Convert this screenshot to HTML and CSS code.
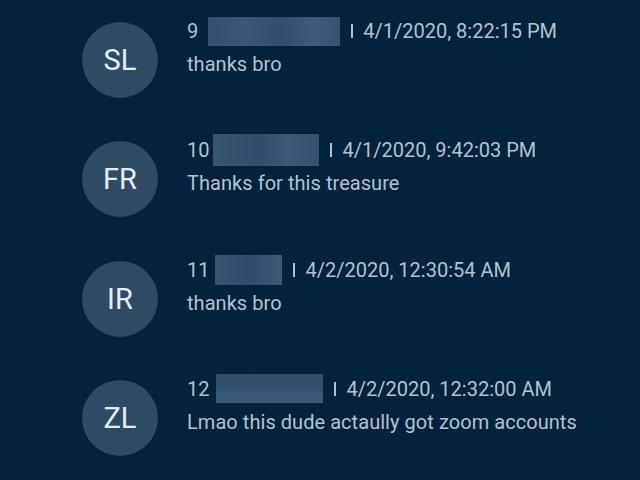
FILE: index.html
```html
<!DOCTYPE html>
<html lang="en">
<head>
    <meta charset="UTF-8">
    <title>Comments</title>
    <link rel="stylesheet" href="styles.css">
</head>
<body>
    <div class="comments">
        <!-- 9 -->
        <div class="comment">
            <div class="avatar">SL</div>
            <div class="content">
                <div class="meta">
                    <span class="num">9</span>
                    <span class="blur blur-a"></span>
                    <span class="sep"></span>
                    <span class="date">4/1/2020, 8:22:15 PM</span>
                </div>
                <p class="text">thanks bro</p>
            </div>
        </div>

        <!-- 10 -->
        <div class="comment">
            <div class="avatar">FR</div>
            <div class="content">
                <div class="meta">
                    <span class="num">10</span>
                    <span class="blur blur-b"></span>
                    <span class="sep"></span>
                    <span class="date">4/1/2020, 9:42:03 PM</span>
                </div>
                <p class="text">Thanks for this treasure</p>
            </div>
        </div>

        <!-- 11 -->
        <div class="comment">
            <div class="avatar">IR</div>
            <div class="content">
                <div class="meta">
                    <span class="num">11</span>
                    <span class="blur blur-c"></span>
                    <span class="sep"></span>
                    <span class="date">4/2/2020, 12:30:54 AM</span>
                </div>
                <p class="text">thanks bro</p>
            </div>
        </div>

        <!-- 12 -->
        <div class="comment">
            <div class="avatar">ZL</div>
            <div class="content">
                <div class="meta">
                    <span class="num">12</span>
                    <span class="blur blur-d"></span>
                    <span class="sep"></span>
                    <span class="date">4/2/2020, 12:32:00 AM</span>
                </div>
                <p class="text">Lmao this dude actaully got zoom accounts</p>
            </div>
        </div>
    </div>
</body>
</html>
```

FILE: styles.css
```css
/* base */
body {
    margin: 0;
    background-color: #03223c;
    font-family: Roboto, "Liberation Sans", sans-serif;
    color: #b4c2ce;
}

.comments {
    padding: 16px 0 0 82px;
}

.comment {
    display: flex;
    height: 119.3px;
}

.avatar {
    width: 76px;
    height: 76px;
    margin-top: 6px;
    border-radius: 50%;
    background-color: #2f4a63;
    color: #e6edf2;
    font-size: 29px;
    display: flex;
    align-items: center;
    justify-content: center;
    flex-shrink: 0;
}

.content {
    margin-left: 29px;
}

/* header line */
.meta {
    display: flex;
    align-items: center;
    height: 30px;
    font-size: 20px;
}

.blur {
    display: inline-block;
    margin-left: 10px;
    background-color: #34536f;
}

.blur-a {
    width: 132px;
    height: 29px;
    background-image: linear-gradient(90deg, #31506c 0, #3a5874 30%, #2f4e6a 55%, #3e5c77 80%, #34536f 100%);
}

.blur-b {
    width: 106px;
    height: 32px;
    margin-left: 4px;
    background-image: linear-gradient(90deg, #36556f 0, #2f4e69 45%, #3b5a75 70%, #33526d 100%);
}

.blur-c {
    width: 67px;
    height: 30px;
    margin-left: 6px;
    background-image: linear-gradient(90deg, #36556f 0, #2f4d69 50%, #3c5a74 100%);
}

.blur-d {
    width: 107px;
    height: 29px;
    margin-left: 7px;
    background-image: linear-gradient(180deg, #30506c 0, #32516c 55%, #3c5a75 60%, #3a5873 100%);
}

.sep {
    display: inline-block;
    width: 2px;
    height: 14px;
    margin: 0 10px 0 11px;
    background-color: #b4c2ce;
}

.text {
    margin: 6px 0 0;
    font-size: 20px;
    letter-spacing: 0.05px;
}
```
